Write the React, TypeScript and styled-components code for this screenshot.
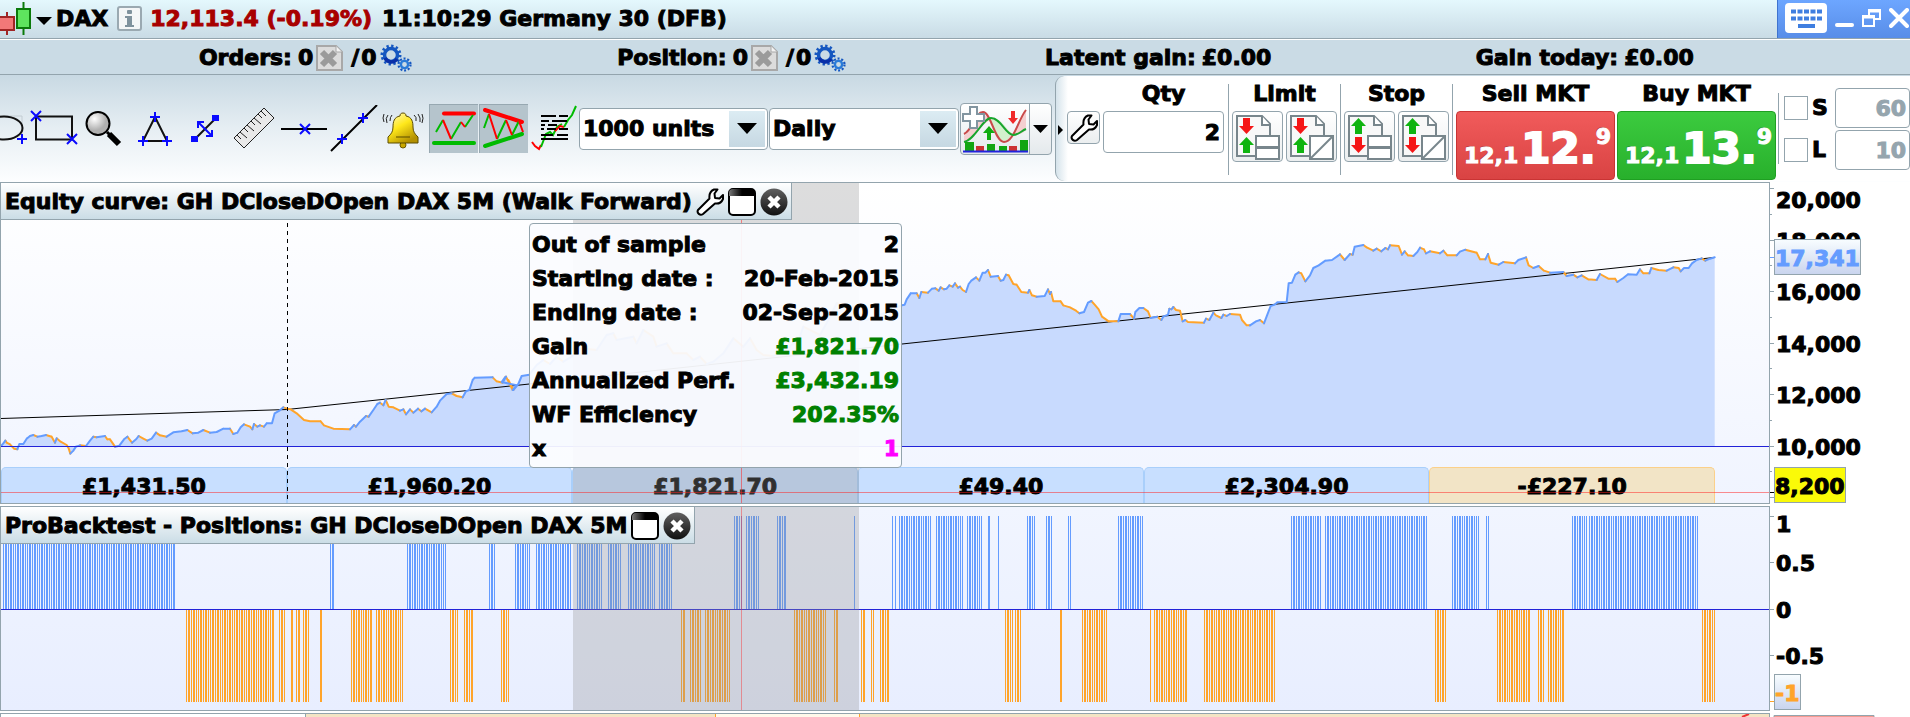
import React from "react";
import styled, { createGlobalStyle, css } from "styled-components";

const INK = "#000000";
const EDGE = "#93a4ad";
const UP = "#649cff";
const DOWN = "#ffa42a";

const GlobalStyle = createGlobalStyle`
  *, *::before, *::after { box-sizing: border-box; }
  body { margin: 0; background: #fff; overflow: hidden; }
  body, button, input, select {
    font-family: "DejaVu Sans", Verdana, sans-serif;
    font-size: 22px;
    font-weight: 700;
    line-height: 28px;
    color: ${INK};
    -webkit-text-stroke: 1px currentColor;
  }
  svg { display: block; flex: none; }
`;

const Page = styled.div`
  display: flex;
  flex-direction: column;
  height: 100vh;
  min-width: 1500px;
  overflow: hidden;
`;

/* ---------- title bar ---------- */

const TitleBar = styled.header`
  display: flex;
  justify-content: space-between;
  height: 39px;
  border-bottom: 1px solid ${EDGE};
  background: linear-gradient(#e4f8fd, #c9dbe5);
`;

const Instrument = styled.div`
  display: flex;
  align-items: center;
  padding-bottom: 1px;
  white-space: pre;
`;

const PlainButton = styled.button`
  display: flex;
  align-items: center;
  padding: 0;
  border: 0;
  background: none;
`;

const Name = styled.span`
  margin: 0 9px 0 4px;
`;

const Quote = styled.span`
  margin: 0 10px 0 8px;
  color: #a80000;
`;

const WindowControls = styled.div`
  display: flex;
  align-items: center;
  gap: 8px;
  height: 38px;
  padding: 0 1px 2px 7px;
  border-left: 1px solid #3f73cf;
  background: linear-gradient(#6da6ff, #588de8);
`;

/* ---------- account summary ---------- */

const Summary = styled.section`
  display: grid;
  grid-template-columns: repeat(4, 1fr);
  margin-top: 1px;
  padding: 1px 112px 0 92px;
  height: 35px;
  border-bottom: 1px solid ${EDGE};
  background: #cadbe5;
`;

const SummaryItem = styled.div`
  display: flex;
  align-items: center;
  justify-content: center;
  gap: 6px;
  white-space: nowrap;
`;

const SummaryActions = styled.span`
  display: flex;
  align-items: center;
  gap: 3px;
`;

const Slash = styled.span`
  margin: 0 2px 0 5px;
`;

/* ---------- toolbar ---------- */

const Toolbar = styled.div`
  display: flex;
  height: 107px;
  background: linear-gradient(#c8d9e3, #e6eef3 50%, #fdfeff);
`;

const Tools = styled.div`
  display: flex;
  flex: 1;
  align-items: center;
`;

const ToolButton = styled.button<{ $active?: boolean }>`
  display: flex;
  align-items: center;
  height: 49px;
  padding: 0;
  border: 0;
  background: none;
  ${(p) =>
    p.$active &&
    css`
      margin-left: 1px;
      border-top: 1px solid #97a8b1;
      border-left: 1px solid #97a8b1;
      background: #b5c4cc;
    `}
`;

const SelectBox = styled.div<{ $width: number }>`
  display: grid;
  grid-template-columns: 1fr 38px;
  width: ${(p) => p.$width}px;
  height: 42px;
  margin-right: 1px;
  border: 1px solid ${EDGE};
  border-radius: 4px;
  background: #fff;
`;

const Select = styled.select`
  grid-area: 1 / 1 / 2 / 3;
  appearance: none;
  padding: 0 40px 0 3px;
  border: 0;
  background: none;
`;

const SelectArrow = styled.span`
  grid-area: 1 / 2 / 2 / 3;
  display: flex;
  align-items: center;
  justify-content: center;
  margin: 2px 2px 2px 0;
  background: linear-gradient(#dcecf3, #c6d8e2);
  pointer-events: none;
`;

const SplitButton = styled.div`
  display: flex;
  height: 52px;
  border: 1px solid ${EDGE};
  border-radius: 4px;
  background: linear-gradient(#ffffff, #e4e9ec);
`;

const SplitArrow = styled(PlainButton)`
  justify-content: center;
  width: 22px;
  border-left: 1px solid ${EDGE};
`;

/* ---------- order entry ---------- */

const OrderEntry = styled.div`
  display: flex;
  flex: none;
  margin: 1px 0;
  border-left: 1px solid ${EDGE};
  border-radius: 9px 0 0 9px;
  background: linear-gradient(90deg, #d5e3eb, #ffffff 12px);
`;

const Collapse = styled(PlainButton)`
  padding: 2px 4px 0 2px;
`;

const SettingsSlot = styled.div`
  padding: 35px 3px 0 0;
`;

const OrderGroup = styled.div<{ $pad: string; $ruled?: boolean }>`
  display: flex;
  flex-direction: column;
  align-items: center;
  gap: 3px;
  padding: ${(p) => p.$pad};
  ${(p) =>
    p.$ruled &&
    css`
      background: linear-gradient(${EDGE}, ${EDGE}) 0 8px / 1px 91px no-repeat;
    `}
`;

const GroupTitle = styled.label`
  margin-top: 4px;
  white-space: nowrap;
`;

const Row = styled.div`
  display: flex;
  gap: 3px;
`;

const IconButton = styled.button<{ $size: number }>`
  display: flex;
  align-items: center;
  justify-content: center;
  width: ${(p) => p.$size}px;
  height: ${(p) => p.$size}px;
  padding: 0;
  border: 1px solid ${EDGE};
  border-radius: 4px;
  background: linear-gradient(#ffffff, #ebeeef);
`;

const NumberInput = styled.input<{ $width: number; $muted?: boolean }>`
  width: ${(p) => p.$width}px;
  height: ${(p) => (p.$muted ? 40 : 42)}px;
  padding: 0 3px;
  border: 1px solid ${EDGE};
  border-radius: 4px;
  background: #fff;
  color: ${(p) => (p.$muted ? "#95a5ae" : INK)};
  text-align: right;
`;

const PriceButton = styled.button<{ $side: "sell" | "buy" }>`
  display: flex;
  align-items: baseline;
  justify-content: flex-end;
  width: 159px;
  height: 69px;
  padding: 11px 3px 0 0;
  border: 1px solid ${(p) => (p.$side === "sell" ? "#c93434" : "#1f9f22")};
  border-radius: 4px;
  background: ${(p) =>
    p.$side === "sell"
      ? "linear-gradient(#f15b5b, #d94343)"
      : "linear-gradient(#3ccb3f, #28b02c)"};
  color: #fff;
  text-shadow: -1px -1px 0 rgba(0, 0, 0, 0.25);
`;

const Big = styled.span`
  margin-left: 3px;
  font-size: 42px;
  line-height: 52px;
  -webkit-text-stroke-width: 2px;
`;

const Tick = styled.span`
  align-self: flex-start;
  line-height: 28px;
`;

const Brackets = styled.div`
  display: grid;
  grid-template-columns: 24px 19px 75px;
  align-content: start;
  align-items: center;
  gap: 2px 4px;
  padding: 12px 0 0 6px;
  background: linear-gradient(${EDGE}, ${EDGE}) 0 17px / 1px 71px no-repeat;
`;

const Check = styled.input`
  appearance: none;
  width: 24px;
  height: 24px;
  margin: 0;
  border: 1px solid ${EDGE};
  background: #fff;
`;

/* ---------- chart panels ---------- */

const PanelRow = styled.section`
  display: grid;
  grid-template-columns: minmax(0, 1fr) 140px;
  margin-bottom: 2px;
`;

const Panel = styled.div<{ $from: string; $to: string }>`
  position: relative;
  border: 1px solid ${EDGE};
  background: linear-gradient(${(p) => p.$from}, ${(p) => p.$to});
`;

const PanelTitle = styled.div`
  position: absolute;
  top: 0;
  left: 0;
  z-index: 2;
  display: flex;
  align-items: center;
  gap: 4px;
  height: 37px;
  padding: 1px 3px 0 4px;
  border-right: 1px solid ${EDGE};
  border-bottom: 1px solid ${EDGE};
  background: linear-gradient(#ffffff, #cbdde6);
  white-space: nowrap;
`;

const Overlay = styled.svg`
  position: absolute;
  inset: 0;
  width: 100%;
  height: 100%;
`;

const Periods = styled.div`
  display: flex;
  height: 36px;
  padding-right: 54px;
`;

const Period = styled.div<{ $loss?: boolean }>`
  flex: 1;
  padding-top: 5px;
  border: 1px solid ${(p) => (p.$loss ? "#fbd08a" : "#a9cffb")};
  border-bottom: 0;
  border-radius: 5px 5px 0 0;
  background: ${(p) => (p.$loss ? "#f2e4c6" : "#c8dfff")};
  text-align: center;
`;

const Tip = styled.dl`
  position: absolute;
  top: 40px;
  left: 528px;
  z-index: 3;
  width: 373px;
  margin: 0;
  padding: 4px 2px 1px;
  border: 1px solid ${EDGE};
  border-radius: 4px;
  background: rgba(251, 252, 255, 0.93);
`;

const TipRow = styled.div`
  display: flex;
  justify-content: space-between;
  line-height: 34px;
`;

const TipValue = styled.dd<{ $color?: string }>`
  margin: 0;
  color: ${(p) => p.$color ?? INK};
`;

const AxisText = styled.text<{ $color?: string }>`
  fill: ${(p) => p.$color ?? INK};
  stroke: ${(p) => p.$color ?? INK};
  stroke-width: 1px;
  -webkit-text-stroke: 0;
`;

const NextPanel = styled.div`
  display: grid;
  grid-template-columns: minmax(0, 1fr) 140px;
  flex: 1;
  min-height: 4px;
`;

/* ---------- chart data ---------- */

type Pt = [number, number];

const place = (x: number, y: number, raw: number[]): Pt[] => {
  const out: Pt[] = [];
  for (let i = 0; i < raw.length; i += 2) out.push([x + raw[i] / 3, y + raw[i + 1] / 3]);
  return out;
};

const equity: Pt[] = [
  ...place(0, 180, [
    3,798,10,790,16,782,20,788,30,793,42,806,52,808,58,792,70,792,80,776,90,768,100,765,112,770,125,768,138,765,155,770,165,788,170,775,182,785,200,795,206,805,211,821,220,812,228,800,240,796,258,798,270,782,280,770,290,772,315,768,322,778,330,778,345,800,358,797,372,778,382,770,396,788,408,778,416,768,430,776,442,782,455,776,468,758,480,766,500,770,520,757,545,754,562,750,578,760,595,758,610,750,630,758,650,756,670,746,690,746,700,762,712,758,722,742,732,733,750,740,757,748,762,732,772,740,780,736,792,740,800,730,816,730,824,700,838,692,850,682,862,686,872,688,890,700,912,720,930,724,962,724,972,736,1000,746,1050,748,1062,735,1068,740,1080,725,1098,708,1106,710,1120,690,1132,672,1140,668,1150,676,1157,660,1166,680,1180,682,1200,692,1210,688,1218,703,1230,688,1240,698,1254,686,1264,694,1275,686,1295,697,1310,680,1320,662,1340,642,1355,640,1370,648,1388,652,1398,634,1408,630,1418,600,1424,593,1478,592,1490,604,1508,608,1518,590,1528,610,1538,630,1550,616,
  ]),
  ...place(500, 180, [
    5,606,15,592,25,600,40,630,55,612,65,588,88,584,110,555,130,540,150,552,170,530,190,545,215,530,240,505,290,510,320,465,340,460,350,480,400,470,410,490,430,450,460,470,470,500,500,490,520,520,560,520,580,540,600,530,620,552,640,545,670,520,700,475,730,500,750,475,770,510,790,525,820,528,870,500,900,470,910,440,960,465,985,420,1010,370,1060,380,1100,420,1150,400,1200,378,
  ]),
  ...place(900, 220, [
    6,256,14,254,20,238,32,220,50,220,58,234,64,216,84,218,96,206,106,205,116,212,122,202,132,208,140,206,148,196,158,200,165,190,174,203,180,200,188,210,198,216,206,192,214,182,228,172,238,182,248,158,256,158,264,150,272,170,294,168,302,182,310,180,318,164,326,166,340,192,350,194,364,216,384,218,388,210,396,226,410,230,434,228,444,208,450,222,453,216,460,244,482,244,490,256,510,262,528,272,538,280,552,276,564,248,574,243,584,254,596,268,606,290,626,304,655,304,662,282,690,282,702,296,706,276,718,264,730,264,744,274,752,294,772,290,784,300,790,290,804,284,808,266,814,268,820,261,828,270,840,272,848,304,856,300,864,306,912,308,918,296,928,300,940,278,948,286,964,294,970,284,980,288,990,282,1020,284,1026,300,1040,316,1050,316,1068,304,1080,300,1092,310,1102,284,1112,258,1124,254,1132,247,1160,246,1166,190,1176,188,1186,164,1196,157,1204,160,1216,184,1230,166,1240,144,1256,136,1276,122,1296,120,1320,103,1334,120,1350,102,1358,104,1364,80,1390,75,1400,82,1420,92,1430,86,1444,94,1456,84,1464,88,1470,76,1496,78,1506,104,1514,94,1524,106,1540,108,1552,96,
  ]),
  ...place(1400, 180, [
    60,203,72,208,78,220,90,214,120,220,130,212,142,226,170,226,180,215,196,209,230,218,240,238,256,238,264,222,272,248,296,254,310,246,345,250,355,240,378,232,386,256,400,264,416,258,432,272,450,278,490,276,500,288,520,284,532,292,545,286,565,298,590,300,600,282,625,296,645,296,652,306,670,294,684,283,710,284,720,268,730,280,748,280,754,264,775,270,800,272,820,262,836,264,842,274,852,264,866,264,876,250,890,240,905,235,916,242,930,236,944,232,
  ]),
];

const curve = equity.map((p) => p.map((n) => n.toFixed(1)).join(" ")).join("L");

/* Splits the curve by direction; a flat stretch keeps the direction before it. */
const split = () => {
  const paths = { up: "", down: "" };
  let direction: "up" | "down" = "up";
  equity.slice(1).forEach((p, i) => {
    const q = equity[i];
    const rise = q[1] - p[1];
    if (Math.abs(rise) > 0.5) direction = rise > 0 ? "up" : "down";
    paths[direction] += `M${q[0]} ${q[1]}L${p[0]} ${p[1]}`;
  });
  return paths;
};

const segments = split();

const longRuns: Pt[] = [
  [3, 175], [330, 334], [407, 446], [489, 495], [515, 530], [536, 571], [577, 603], [608, 622],
  [628, 655], [659, 672], [734, 742], [746, 759], [777, 787], [854, 855], [892, 893], [895, 896],
  [899, 931], [936, 963], [967, 982], [988, 990], [998, 999], [1027, 1035], [1046, 1052],
  [1068, 1071], [1118, 1143], [1291, 1321], [1325, 1427], [1452, 1479], [1486, 1489],
  [1572, 1587], [1589, 1698],
];

const shortRuns: Pt[] = [
  [186, 274], [279, 286], [291, 293], [296, 300], [303, 309], [320, 322], [351, 372], [376, 403],
  [450, 458], [464, 473], [501, 509], [681, 686], [690, 701], [705, 730], [794, 826], [834, 838],
  [861, 865], [871, 874], [880, 889], [1005, 1013], [1015, 1021], [1060, 1062], [1082, 1107],
  [1150, 1151], [1154, 1187], [1204, 1275], [1435, 1446], [1497, 1530], [1538, 1544],
  [1548, 1564], [1702, 1715],
];

const BAR_WIDTHS = [1, 2, 1, 2, 1];

const bars = (runs: Pt[], top: number, bottom: number) =>
  runs
    .map(([from, to]) => {
      if (to - from === 2) return `M${from} ${top}H${to}V${bottom}H${from}Z`;
      let d = "";
      let i = 0;
      for (let x = from; x < to; i += 1) {
        const w = Math.min(BAR_WIDTHS[i % 5], to - x);
        d += `M${x} ${top}h${w}V${bottom}h-${w}Z`;
        x += w + 1;
      }
      return d;
    })
    .join("");

const periods = ["£1,431.50", "£1,960.20", "£1,821.70", "£49.40", "£2,304.90", "-£227.10"];

const tipRows: [string, string, string?][] = [
  ["Out of sample", "2"],
  ["Starting date :", "20-Feb-2015"],
  ["Ending date :", "02-Sep-2015"],
  ["Gain", "£1,821.70", "#008000"],
  ["Annualized Perf.", "£3,432.19", "#008000"],
  ["WF Efficiency", "202.35%", "#008000"],
  ["x", "1", "#ff00ff"],
];

/* ---------- icons ---------- */

const Blue = "#0a0aff";

const Icon = ({ x, w, children }: { x: number; w: number; children: React.ReactNode }) => (
  <svg width={w} height={48} viewBox={`${x} 105 ${w} 48`} fill="none">
    {children}
  </svg>
);

const plus = (x: number, y: number) => `M${x - 5} ${y}h10M${x} ${y - 5}v10`;
const cross = (x: number, y: number) => `M${x - 5} ${y - 5}l10 10M${x + 5} ${y - 5}l-10 10`;

const DownArrow = ({ w = 18, h = 10 }: { w?: number; h?: number }) => (
  <svg width={w} height={h} viewBox="0 0 18 10" preserveAspectRatio="none">
    <path d="M0 0h18L9 10Z" fill="#000" />
  </svg>
);

const Wrench = ({ size }: { size: number }) => (
  <svg width={size} height={size} viewBox="0 0 28 28">
    <path
      d="M18 1.500h3.500l-3 4 .5 4.500 4.500.5 3.500-3.500v4c-1.500 3.500-4.500 5-8 4.500L7 26c-3 2-6.500-1-5-4L13.500 10.500C13 6.500 14.500 3 18 1.500Z"
      fill="#fff"
      stroke="#000"
      strokeWidth="2"
      strokeLinejoin="round"
    />
  </svg>
);

const DeleteIcon = () => (
  <svg width="27" height="26" viewBox="0 0 27 26">
    <path d="M1 1h19l6 6v18H1Z" fill="#dcdcdc" stroke="#a8a8a8" strokeWidth="2" />
    <path d="M20 1v6h6" fill="#f2f2f2" stroke="#a8a8a8" strokeWidth="1" />
    <path d="M6 7l13 13M19 7L6 20" stroke="#9b9b9b" strokeWidth="6" />
  </svg>
);

const Gears = () => (
  <svg width="32" height="28" viewBox="0 0 32 28" fill="none">
    <circle cx="11" cy="11" r="6.500" stroke="#1557c0" strokeWidth="3.500" />
    <circle cx="11" cy="11" r="9" stroke="#1557c0" strokeWidth="3" strokeDasharray="2.300 2.400" />
    <circle cx="24.500" cy="20.500" r="3.600" stroke="#2a7bd8" strokeWidth="2.400" />
    <circle cx="24.500" cy="20.500" r="6" stroke="#1557c0" strokeWidth="2.200" strokeDasharray="2 1.800" />
    <path d="M5 14a7 7 0 0 0 12 1" stroke="#0a2fa8" strokeWidth="3.500" />
  </svg>
);

const WindowIcon = () => (
  <svg width="28" height="28" viewBox="0 0 28 28">
    <defs>
      <linearGradient id="cap">
        <stop offset="0" stopColor="#777" />
        <stop offset="0.500" stopColor="#000" />
      </linearGradient>
    </defs>
    <rect x="1" y="1" width="26" height="26" rx="4" fill="#fff" stroke="#000" strokeWidth="2" />
    <path d="M1 8V5a4 4 0 0 1 4-4h18a4 4 0 0 1 4 4v3Z" fill="url(#cap)" />
  </svg>
);

const CloseIcon = () => (
  <svg width="28" height="28" viewBox="0 0 28 28">
    <defs>
      <linearGradient id="disc" x2="0" y2="1">
        <stop offset="0" stopColor="#606060" />
        <stop offset="1" stopColor="#101010" />
      </linearGradient>
    </defs>
    <circle cx="14" cy="14" r="13.500" fill="url(#disc)" />
    <path d="M9 9l10 10M19 9L9 19" stroke="#fff" strokeWidth="4.500" />
  </svg>
);

const OrderIcon = ({ limit, split }: { limit: boolean; split: boolean }) => {
  const arrow = (top: number, isDown: boolean) => (
    <path
      d={
        isDown
          ? `M8 ${top}h7v8h4l-7.500 8-7.500-8h4Z`
          : `M8 ${top + 16}h7v-8h4l-7.500-8-7.500 8h4Z`
      }
      fill={isDown ? "#f51616" : "#10b410"}
    />
  );
  return (
    <svg width="46" height="46" viewBox="0 0 46 46">
      <path d="M2 2h25l8 8v32H2Z" fill="#f8f8f8" stroke="#78868c" strokeWidth="2" />
      <path d="M27 2v9h8" fill="#fff" stroke="#78868c" strokeWidth="2" />
      {arrow(4, limit)}
      {arrow(23, !limit)}
      <rect x="21" y="22" width="23" height="23" fill="#fff" stroke="#78868c" strokeWidth="2" />
      {split ? (
        <path d="M21 45L44 22" stroke="#78868c" strokeWidth="2" />
      ) : (
        <path d="M21 33.500h23" stroke="#78868c" strokeWidth="3" />
      )}
    </svg>
  );
};

const EllipseTool = () => (
  <Icon x={0} w={29}>
    <path d="M0 116h22v22" stroke="#c3ccd2" />
    <ellipse cx="4" cy="128" rx="18.500" ry="11.500" stroke="#111" strokeWidth="2" />
    <path d={plus(22, 139)} stroke={Blue} strokeWidth="2" />
  </Icon>
);

const RectTool = () => (
  <Icon x={29} w={50}>
    <path d="M36 116.500h36v23H36Z" stroke="#111" strokeWidth="2" />
    <path d={cross(36, 116) + cross(72, 139)} stroke={Blue} strokeWidth="2" />
  </Icon>
);

const ZoomTool = () => (
  <Icon x={79} w={49}>
    <defs>
      <radialGradient id="lens" cx="0.350" cy="0.300">
        <stop offset="0" stopColor="#fff" />
        <stop offset="1" stopColor="#b0b0b0" />
      </radialGradient>
    </defs>
    <path d="M107 132l3 3" stroke="#000" strokeWidth="3" />
    <path d="M109 134l10 10" stroke="#000" strokeWidth="6" />
    <circle cx="98" cy="123.500" r="11.500" fill="url(#lens)" stroke="#000" strokeWidth="2" />
  </Icon>
);

const TriangleTool = () => (
  <Icon x={128} w={53}>
    <path d="M155 117l12 24h-24Z" stroke="#111" strokeWidth="2" />
    <path d={plus(155, 117) + plus(143, 141) + plus(167, 141)} stroke={Blue} strokeWidth="2" />
  </Icon>
);

const SegmentTool = () => (
  <Icon x={181} w={47}>
    <path d="M195 139l20-20" stroke="#111" strokeWidth="2" />
    <path d="M191 136h7v6h-7ZM212 115h7v6h-7Z" fill={Blue} />
    <path d="M199 123l12 12M198 128v-6h6M206 136h6v-6" stroke={Blue} strokeWidth="2" />
  </Icon>
);

const RulerTool = () => (
  <Icon x={228} w={50}>
    <path d="M234 138l30-30 10 10-30 30Z" fill="#e9e9e9" stroke="#222" />
    <path
      d="M237 135l4 4M240 132l7 6M244 128l4 4M247 125l7 6M251 121l4 4M254 118l7 6M258 114l4 4M261 111l5 5"
      stroke="#222"
    />
  </Icon>
);

const HLineTool = () => (
  <Icon x={278} w={51}>
    <path d="M281 129h46" stroke="#000" strokeWidth="2" />
    <path d={cross(305, 129)} stroke={Blue} strokeWidth="2" />
  </Icon>
);

const LineTool = () => (
  <Icon x={329} w={51}>
    <path d="M331 151l46-46" stroke="#000" strokeWidth="2" />
    <path d={plus(342, 139) + plus(363, 118)} stroke={Blue} strokeWidth="2" />
  </Icon>
);

const BellTool = () => (
  <Icon x={380} w={48}>
    <defs>
      <linearGradient id="bell" x2="0.600" y2="1">
        <stop offset="0" stopColor="#fffbd0" />
        <stop offset="0.500" stopColor="#ffe81a" />
        <stop offset="1" stopColor="#b39000" />
      </linearGradient>
    </defs>
    <circle cx="403" cy="145" r="3" fill="#c9a800" stroke="#6b5a00" />
    <path
      d="M403 113c2 0 3 1 3 3 6 1 7 6 7 11s2 7 5 10v6h-30v-6c3-3 5-5 5-10s1-10 7-11c0-2 1-3 3-3Z"
      fill="url(#bell)"
      stroke="#5b4c00"
    />
    <path d="M396 137h14" stroke="#5b4c00" strokeWidth="1" />
    <path d="M388 115q-3 3-1 8M384 114q-2 4 0 8M392 115q-2 2-2 6M414 115q3 2 2 6M418 114q3 4 2 8M422 114q2 4 0 9" stroke="#222" />
  </Icon>
);

const SupportTool = () => (
  <Icon x={430} w={48}>
    <path d="M444 113.500h30" stroke="#f00" strokeWidth="4" strokeLinecap="round" />
    <path d="M434 143h40" stroke="#0b0" strokeWidth="4" strokeLinecap="round" />
    <path d="M436 132l7-12M451 139l10-17M465 127l8-12" stroke="#0b0" strokeWidth="2" />
    <path d="M443 120l8 19M461 122l4 5" stroke="#f00" strokeWidth="2" />
  </Icon>
);

const ChannelTool = () => (
  <Icon x={480} w={48}>
    <path d="M485 110l37 12" stroke="#f00" strokeWidth="4" strokeLinecap="round" />
    <path d="M485 146l37-12" stroke="#0b0" strokeWidth="4" strokeLinecap="round" />
    <path d="M484 128l5-14M497 139l9-19M512 135l7-14" stroke="#0b0" strokeWidth="2" />
    <path d="M489 114l8 25M506 120l6 15M519 121l4 11" stroke="#f00" strokeWidth="2" />
  </Icon>
);

const NewsTool = () => (
  <Icon x={528} w={51}>
    <path d="M532 142l3 4 4 3 2-4" stroke="#f00" strokeWidth="2" />
    <path d="M541 147l5-13 4-2 3 3 4-8 5-3" stroke="#0b0" strokeWidth="2" />
    <path d="M555 131l5-5 4 1" stroke="#f00" strokeWidth="2" />
    <path d="M564 127l4-7 4-5 4-9" stroke="#0b0" strokeWidth="2" />
    <path
      d="M541 116h15M559 116h9M541 121h8M552 121h15M541 125h4M548 125h9M541 129h3M547 129h9M559 129h9M541 135h12M557 135h11M541 139h27"
      stroke="#000"
      strokeWidth="2"
    />
  </Icon>
);

const IndicatorIcon = () => (
  <svg width="68" height="50" viewBox="0 0 68 50" fill="none">
    <path d="M3 32C10 28 12 12 20 10c10-2 12 28 22 28 12 0 14-24 23-33v21c-8 8-14 4-18 0C38 16 34 12 26 18 18 24 10 38 3 38Z" fill="#f4cfd0" />
    <path d="M28 15c10-4 16 8 22 14-4 12-12 12-22-14Z" fill="#d3f0cd" />
    <path d="M3 30C12 26 14 8 22 8c8 0 12 30 21 30 10 0 14-22 22-32" stroke="#c94a4a" strokeWidth="2" />
    <path d="M3 38C14 36 22 14 30 14c10 0 14 16 22 17 6 0 8-4 13-6" stroke="#17a52d" strokeWidth="2" />
    <path d="M9 3h7v7h7v7h-7v7H9v-7H2v-7h7Z" fill="#fff" stroke="#8295a0" strokeWidth="2" />
    <path d="M26 36v-7h-4l6-7 6 7h-4v7Z" fill="#12ac12" />
    <path d="M50 7v7h-3l5 6 5-6h-3V7Z" fill="#f02a2a" />
    <path d="M4 38h9v9H4ZM26 40h8v7h-8ZM38 42h8v5h-8ZM59 36h8v11h-8Z" fill="#12a512" />
    <path d="M15 42h8v5h-8ZM48 42h8v5h-8Z" fill="#c33" />
    <path d="M2 47.500h65" stroke="#22d" strokeWidth="2" />
  </svg>
);

const Candles = () => (
  <svg width="32" height="33" viewBox="0 0 32 33">
    <path d="M7 10v23" stroke="#a02525" strokeWidth="2" />
    <rect x="-1" y="15" width="15" height="13" fill="#f27878" stroke="#a02525" strokeWidth="2" />
    <path d="M23.500 0v33" stroke="#0a7a0a" strokeWidth="2" />
    <rect x="17" y="7" width="13" height="19" fill="#5ee45e" stroke="#0a7a0a" strokeWidth="2" />
  </svg>
);

const InfoIcon = () => (
  <svg width="25" height="25" viewBox="0 0 25 25">
    <rect x="1" y="1" width="23" height="23" rx="2" fill="#f4f6f7" stroke="#9aa9b1" strokeWidth="2" />
    <rect x="10" y="4" width="5" height="4" rx="1" fill="#7f929d" />
    <path d="M8 10h7v9h2v2H8v-2h2v-7H8Z" fill="#7f929d" />
  </svg>
);

const KeyboardIcon = () => (
  <svg width="42" height="30" viewBox="0 0 42 30">
    <rect width="42" height="30" rx="4" fill="#fff" />
    <path d="M6 8.500h31M6 15.500h31" stroke="#3f7ee0" strokeWidth="4" strokeDasharray="5 1.500" />
    <path d="M13 23h17" stroke="#3f7ee0" strokeWidth="4" />
  </svg>
);

const MinimizeIcon = () => (
  <svg width="19" height="20" viewBox="0 0 19 20">
    <path d="M2 17h15" stroke="#fff" strokeWidth="4" strokeLinecap="round" />
  </svg>
);

const RestoreIcon = () => (
  <svg width="19" height="20" viewBox="0 0 19 20" fill="none" stroke="#fff" strokeWidth="2">
    <path d="M7 7V2h11v9h-5" />
    <path d="M7 3h11" strokeWidth="3" />
    <path d="M1 8h11v10H1Z" />
    <path d="M1 9h11" strokeWidth="3" />
  </svg>
);

const CrossIcon = () => (
  <svg width="20" height="20" viewBox="0 0 20 20">
    <path d="M2 2l16 16M18 2L2 18" stroke="#fff" strokeWidth="4" strokeLinecap="round" />
  </svg>
);

/* ---------- sections ---------- */

const OpenCount = ({ label }: { label: string }) => (
  <SummaryItem>
    <span>{label}</span>
    <SummaryActions>
      <span>0</span>
      <PlainButton aria-label="Close all">
        <DeleteIcon />
      </PlainButton>
      <span>
        <Slash>/</Slash>0
      </span>
      <PlainButton aria-label="Automatic">
        <Gears />
      </PlainButton>
    </SummaryActions>
  </SummaryItem>
);

const tools: [string, React.ReactNode][] = [
  ["Ellipse", <EllipseTool />],
  ["Rectangle", <RectTool />],
  ["Zoom", <ZoomTool />],
  ["Triangle", <TriangleTool />],
  ["Segment", <SegmentTool />],
  ["Ruler", <RulerTool />],
  ["Horizontal line", <HLineTool />],
  ["Line", <LineTool />],
  ["Alert", <BellTool />],
];

const Price = ({ side, lead, main }: { side: "sell" | "buy"; lead: string; main: string }) => (
  <PriceButton $side={side}>
    <span>{lead}</span>
    <Big>{main}</Big>
    <Tick>9</Tick>
  </PriceButton>
);

const OrderPair = ({ title, limit }: { title: string; limit: boolean }) => (
  <OrderGroup $ruled $pad="0 3px 0 4px">
    <GroupTitle as="span">{title}</GroupTitle>
    <Row>
      <IconButton $size={51} aria-label={`${title} order`}>
        <OrderIcon limit={limit} split={false} />
      </IconButton>
      <IconButton $size={51} aria-label={`${title} order on line`}>
        <OrderIcon limit={limit} split />
      </IconButton>
    </Row>
  </OrderGroup>
);

const EquityAxis = () => (
  <svg width="140" height="322" viewBox="1770 182 140 322">
    <defs>
      <linearGradient id="lastBox" x2="0" y2="1">
        <stop offset="0" stopColor="#f8fdff" />
        <stop offset="1" stopColor="#c9d4ee" />
      </linearGradient>
    </defs>
    <path
      d="M1770 188.500h4M1770 214.500h2M1770 240.500h4M1770 265.500h2M1770 291.500h4M1770 317.500h2M1770 343.500h4M1770 368.500h2M1770 394.500h4M1770 420.500h2M1770 446.500h4M1770 471.500h2M1770 497.500h4"
      stroke={EDGE}
    />
    <path d="M1770 257.500h4" stroke={UP} />
    <path d="M1770 492.500h4" stroke="#000" />
    <AxisText x="1776" y="208">20,000</AxisText>
    <AxisText x="1776" y="249">18,000</AxisText>
    <AxisText x="1776" y="300">16,000</AxisText>
    <AxisText x="1776" y="352">14,000</AxisText>
    <AxisText x="1776" y="403">12,000</AxisText>
    <AxisText x="1776" y="455">10,000</AxisText>
    <rect x="1774.500" y="239.500" width="86" height="35" fill="url(#lastBox)" stroke={EDGE} />
    <AxisText x="1775" y="266" $color={UP}>17,341</AxisText>
    <rect x="1774.500" y="467.500" width="71" height="35" fill="#fafa08" stroke={EDGE} />
    <AxisText x="1775" y="494">8,200</AxisText>
  </svg>
);

const PositionAxis = () => (
  <svg width="140" height="205" viewBox="1770 506 140 205">
    <path d="M1770 516.500h4M1770 562.500h4M1770 609.500h4M1770 655.500h4" stroke={EDGE} />
    <path d="M1770 701.500h4" stroke={DOWN} />
    <AxisText x="1776" y="532">1</AxisText>
    <AxisText x="1776" y="571">0.5</AxisText>
    <AxisText x="1776" y="618">0</AxisText>
    <AxisText x="1776" y="664">-0.5</AxisText>
    <rect x="1774.500" y="674.500" width="26" height="35" fill="url(#lastBox)" stroke={EDGE} />
    <AxisText x="1775" y="701" $color={DOWN}>-1</AxisText>
  </svg>
);

export default function App() {
  return (
    <Page>
      <GlobalStyle />
      <TitleBar>
        <Instrument>
          <PlainButton aria-label="Choose instrument">
            <Candles />
            <svg width="20" height="16" viewBox="0 0 20 16">
              <path d="M4 6h16l-8 8Z" />
            </svg>
          </PlainButton>
          <Name>DAX</Name>
          <PlainButton aria-label="Instrument information">
            <InfoIcon />
          </PlainButton>
          <Quote>12,113.4 (-0.19%)</Quote>
          <span>11:10:29 Germany 30 (DFB)</span>
        </Instrument>
        <WindowControls>
          <PlainButton aria-label="Keyboard">
            <KeyboardIcon />
          </PlainButton>
          <PlainButton aria-label="Minimize">
            <MinimizeIcon />
          </PlainButton>
          <PlainButton aria-label="Restore">
            <RestoreIcon />
          </PlainButton>
          <PlainButton aria-label="Close">
            <CrossIcon />
          </PlainButton>
        </WindowControls>
      </TitleBar>

      <Summary>
        <OpenCount label="Orders:" />
        <OpenCount label="Position:" />
        <SummaryItem>
          <span>Latent gain:</span>
          <span>£0.00</span>
        </SummaryItem>
        <SummaryItem>
          <span>Gain today:</span>
          <span>£0.00</span>
        </SummaryItem>
      </Summary>

      <Toolbar>
        <Tools>
          {tools.map(([name, icon]) => (
            <ToolButton key={name} aria-label={name}>
              {icon}
            </ToolButton>
          ))}
          <ToolButton $active aria-label="Support and resistance">
            <SupportTool />
          </ToolButton>
          <ToolButton $active aria-label="Trend channels">
            <ChannelTool />
          </ToolButton>
          <ToolButton aria-label="News">
            <NewsTool />
          </ToolButton>
          <SelectBox $width={189}>
            <Select aria-label="History length" defaultValue="1000 units">
              <option>1000 units</option>
            </Select>
            <SelectArrow>
              <DownArrow w={20} h={11} />
            </SelectArrow>
          </SelectBox>
          <SelectBox $width={190}>
            <Select aria-label="Timeframe" defaultValue="Daily">
              <option>Daily</option>
            </Select>
            <SelectArrow>
              <DownArrow w={20} h={11} />
            </SelectArrow>
          </SelectBox>
          <SplitButton>
            <PlainButton aria-label="Add indicator">
              <IndicatorIcon />
            </PlainButton>
            <SplitArrow aria-label="Indicator list">
              <DownArrow w={15} h={8} />
            </SplitArrow>
          </SplitButton>
        </Tools>

        <OrderEntry>
          <Collapse aria-label="Collapse order entry">
            <svg width="5" height="10" viewBox="0 0 5 10">
              <path d="M0 0v10l5-5Z" />
            </svg>
          </Collapse>
          <SettingsSlot>
            <IconButton $size={33} aria-label="Order settings">
              <Wrench size={28} />
            </IconButton>
          </SettingsSlot>
          <OrderGroup $pad="0 4px 0 0">
            <GroupTitle htmlFor="qty">Qty</GroupTitle>
            <NumberInput id="qty" $width={121} defaultValue="2" />
          </OrderGroup>
          <OrderPair title="Limit" limit />
          <OrderPair title="Stop" limit={false} />
          <OrderGroup $ruled $pad="0 0 0 4px">
            <GroupTitle as="span">Sell MKT</GroupTitle>
            <Price side="sell" lead="12,1" main="12." />
          </OrderGroup>
          <OrderGroup $pad="0 2px">
            <GroupTitle as="span">Buy MKT</GroupTitle>
            <Price side="buy" lead="12,1" main="13." />
          </OrderGroup>
          <Brackets>
            <Check type="checkbox" id="useStop" />
            <label htmlFor="useStop">S</label>
            <NumberInput aria-label="Stop distance" $width={75} $muted defaultValue="60" />
            <Check type="checkbox" id="useLimit" />
            <label htmlFor="useLimit">L</label>
            <NumberInput aria-label="Limit distance" $width={75} $muted defaultValue="10" />
          </Brackets>
        </OrderEntry>
      </Toolbar>

      <PanelRow>
        <Panel $from="#ffffff" $to="#f0f4ff">
          <PanelTitle>
            Equity curve: GH DCloseDOpen DAX 5M (Walk Forward)
            <PlainButton aria-label="Settings">
              <Wrench size={28} />
            </PlainButton>
            <PlainButton aria-label="Maximize">
              <WindowIcon />
            </PlainButton>
            <PlainButton aria-label="Close panel">
              <CloseIcon />
            </PlainButton>
          </PanelTitle>
          <svg width="100%" height="284" viewBox="1 183 1768 284" preserveAspectRatio="none" fill="none">
            <path d={`M${curve}V446.500H1Z`} fill="#c8dafe" />
            <path d="M1 418.500L287 409.500L520 385L902 344L1714 257.500" stroke="#000" />
            <path d={segments.down} stroke={DOWN} strokeWidth="2" strokeLinecap="round" />
            <path d={segments.up} stroke={UP} strokeWidth="2" strokeLinecap="round" />
            <path d="M1 446.500H1769" stroke="#2222d8" />
          </svg>
          <Periods>
            {periods.map((p) => (
              <Period key={p} $loss={p.startsWith("-")}>
                {p}
              </Period>
            ))}
          </Periods>
          <Overlay viewBox="1 183 1768 320" preserveAspectRatio="none">
            <rect x="573" y="183" width="286" height="320" fill="#969696" fillOpacity="0.320" />
            <path d="M287.500 223V503" stroke="#000" strokeDasharray="4 4" />
            <path d="M1 492.500H1769M741.500 183V503" stroke="#ff2020" strokeOpacity="0.500" />
          </Overlay>
          <Tip>
            {tipRows.map(([label, value, color]) => (
              <TipRow key={label}>
                <dt>{label}</dt>
                <TipValue $color={color}>{value}</TipValue>
              </TipRow>
            ))}
          </Tip>
        </Panel>
        <EquityAxis />
      </PanelRow>

      <PanelRow>
        <Panel $from="#f1f5ff" $to="#e8eeff">
          <PanelTitle>
            ProBacktest - Positions: GH DCloseDOpen DAX 5M
            <PlainButton aria-label="Maximize">
              <WindowIcon />
            </PlainButton>
            <PlainButton aria-label="Close panel">
              <CloseIcon />
            </PlainButton>
          </PanelTitle>
          <svg width="100%" height="203" viewBox="1 507 1768 203" preserveAspectRatio="none" shapeRendering="crispEdges">
            <path d={bars(longRuns, 516, 609)} fill={UP} />
            <path d={bars(shortRuns, 610, 702)} fill={DOWN} />
            <path d="M1 609.500H1769" stroke="#2222d8" />
            <rect x="573" y="507" width="286" height="203" fill="#969696" fillOpacity="0.320" />
            <path d="M741.500 507V710" stroke="#ff2020" strokeOpacity="0.400" />
          </svg>
        </Panel>
        <PositionAxis />
      </PanelRow>

      <NextPanel>
        <Panel $from="#f4e4c4" $to="#f4e4c4">
          <svg width="100%" height="3" viewBox="1 714 1768 3" preserveAspectRatio="none">
            <rect x="1" y="714" width="304" height="3" fill="#fff" />
            <rect x="305" y="714" width="1" height="3" fill={EDGE} />
            <rect x="716" y="714" width="143" height="3" fill="#fff8ea" />
            <path d="M715.500 714v3M859.500 714v3" stroke={DOWN} />
            <path d="M1742 717l7-3" stroke="#e33" strokeWidth="2" />
          </svg>
        </Panel>
        <svg width="140" height="4" viewBox="0 0 140 4">
          <path d="M4 4V2.500h100V4" fill="#f59a90" stroke={EDGE} />
        </svg>
      </NextPanel>
    </Page>
  );
}
